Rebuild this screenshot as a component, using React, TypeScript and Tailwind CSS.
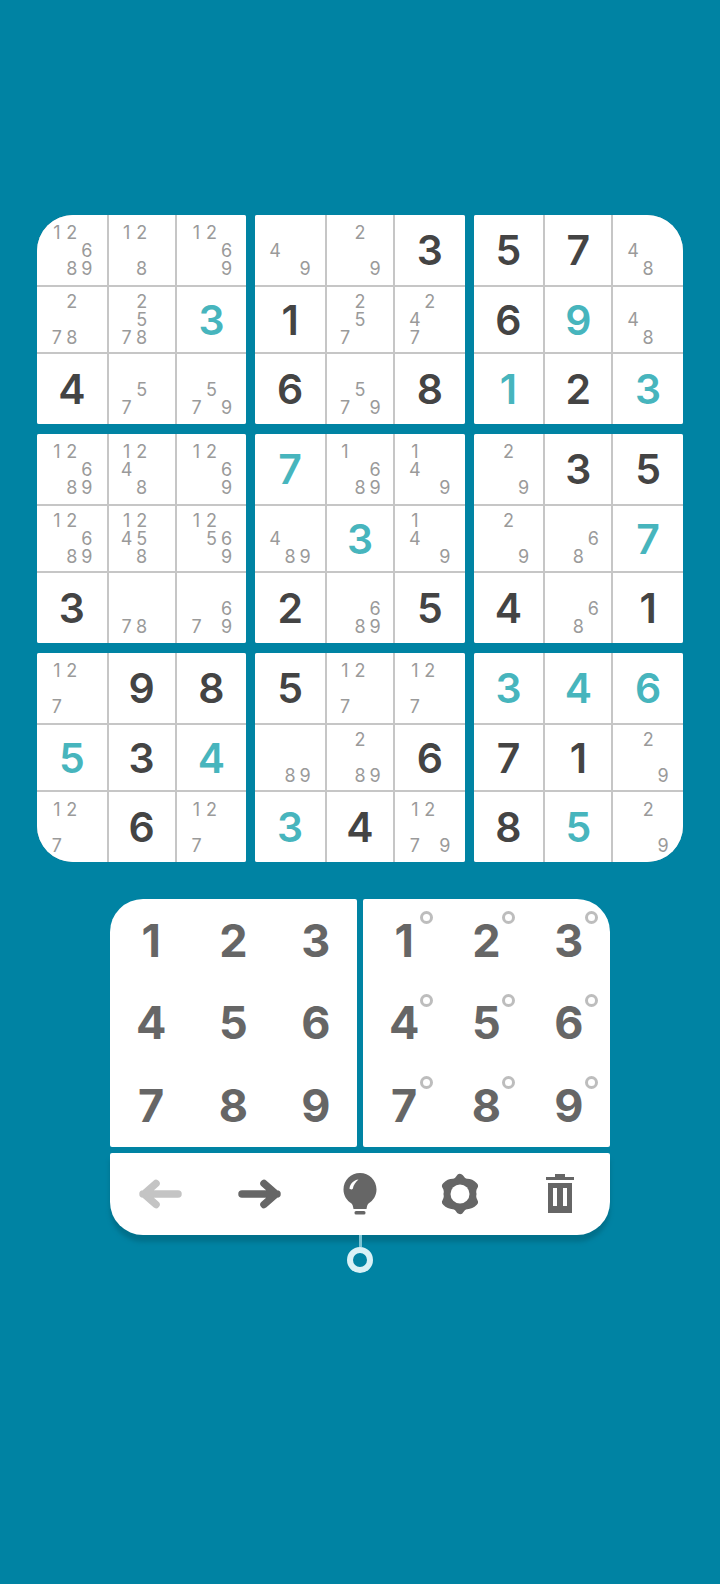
import React from "react";

type Cell = { n: string } | { v: number; t?: boolean };

const n = (s: string): Cell => ({ n: s });
const v = (d: number): Cell => ({ v: d });
const t = (d: number): Cell => ({ v: d, t: true });

const boxes: Cell[][] = [
  [n("12689"), n("128"), n("1269"), n("278"), n("2578"), t(3), v(4), n("57"), n("579")],
  [n("49"), n("29"), v(3), v(1), n("257"), n("247"), v(6), n("579"), v(8)],
  [v(5), v(7), n("48"), v(6), t(9), n("48"), t(1), v(2), t(3)],
  [n("12689"), n("1248"), n("1269"), n("12689"), n("12458"), n("12569"), v(3), n("78"), n("679")],
  [t(7), n("1689"), n("149"), n("489"), t(3), n("149"), v(2), n("689"), v(5)],
  [n("29"), v(3), v(5), n("29"), n("68"), t(7), v(4), n("68"), v(1)],
  [n("127"), v(9), v(8), t(5), v(3), t(4), n("127"), v(6), n("127")],
  [v(5), n("127"), n("127"), n("89"), n("289"), v(6), t(3), v(4), n("1279")],
  [t(3), t(4), t(6), v(7), v(1), n("29"), v(8), t(5), n("29")],
];

const boxCorners = [
  "rounded-[2px] rounded-tl-[36px]",
  "rounded-[2px]",
  "rounded-[2px] rounded-tr-[36px]",
  "rounded-[2px]",
  "rounded-[2px]",
  "rounded-[2px]",
  "rounded-[2px] rounded-bl-[36px]",
  "rounded-[2px]",
  "rounded-[2px] rounded-br-[36px]",
];

const digits = [1, 2, 3, 4, 5, 6, 7, 8, 9];

function Notes({ value }: { value: string }) {
  return (
    <div className="grid grid-cols-[15px_15px_15px] grid-rows-[18px_18px_18px] pt-[1px] text-center text-[18px] leading-[18px] text-[#9a9a9a]">
      {digits.map((d) => (
        <span key={d}>{value.includes(String(d)) ? d : ""}</span>
      ))}
    </div>
  );
}

function SudokuCell({ cell }: { cell: Cell }) {
  return (
    <div className="flex items-center justify-center bg-white">
      {"n" in cell ? (
        <Notes value={cell.n} />
      ) : (
        <span className={cell.t ? "pt-[1px] text-[41px] font-semibold leading-none text-[#47b5bd]" : "pt-[1px] text-[41px] font-semibold leading-none text-[#444444]"}>
          {cell.v}
        </span>
      )}
    </div>
  );
}

function ArrowIcon({ color, flip }: { color: string; flip?: boolean }) {
  return (
    <svg width="44" height="30" viewBox="0 0 44 30" className={flip ? "-scale-x-100" : ""}>
      <path
        d="M5 15H40M18 4.500 6 15l12 10.500"
        fill="none"
        stroke={color}
        strokeWidth="7.500"
        strokeLinecap="round"
        strokeLinejoin="round"
      />
    </svg>
  );
}

function BulbIcon() {
  return (
    <svg width="34" height="42" viewBox="0 0 34 42">
      <path
        d="M17 0C7.900 0 .5 7.400.5 16.500c0 6 3.200 11 8 14 .8.6 1.500 2.500 2 5.500h13c.5-3 1.200-4.900 2-5.500 4.800-3 8-8 8-14C33.500 7.400 26.100 0 17 0Z"
        fill="#666666"
      />
      <path d="M6.500 15.500C7 11 10.500 7 15.500 6.500 12.500 9 10.500 12 9.800 15.800 9 16.800 6.800 16.500 6.500 15.500Z" fill="#ffffff" />
      <rect x="11.500" y="38" width="11" height="3.500" rx="1.500" fill="#666666" />
    </svg>
  );
}

function GearIcon() {
  return (
    <svg width="38" height="42" viewBox="-19 -21 38 42">
      <path
        d="M0-16Q2.500-11.500 6.500-11.200 10.500-11.500 14-8 11.500-4 12.500 0 11.500 4 14 8 10.500 11.500 6.500 11.200 2.500 11.500 0 16-2.500 11.500-6.500 11.200-10.500 11.500-14 8-11.500 4-12.500 0-11.500-4-14-8-10.500-11.500-6.500-11.200-2.500-11.500 0-16Z"
        fill="#666666"
        stroke="#666666"
        strokeWidth="8"
        strokeLinejoin="round"
      />
      <circle r="9.500" fill="#ffffff" />
    </svg>
  );
}

function TrashIcon() {
  return (
    <svg width="28" height="40" viewBox="0 0 28 40">
      <path d="M9 0h10v3h9v3H0V3h9Z" fill="#666666" />
      <path d="M2 9h24v30H2Zm5 5v18h4V14Zm10 0v18h4V14Z" fill="#666666" fillRule="evenodd" />
    </svg>
  );
}

function Pad({ corner, notes }: { corner: string; notes?: boolean }) {
  return (
    <div className={`grid h-[248px] w-[247px] grid-cols-3 grid-rows-3 bg-white text-[#666666] ${corner}`}>
      {digits.map((d) => (
        <div key={d} className="relative flex items-center justify-center text-[45px] font-bold leading-none">
          {d}
          {notes && (
            <span className="absolute left-[57px] top-[12px] h-[13px] w-[13px] rounded-full border-[3px] border-[#bdbdbd]" />
          )}
        </div>
      ))}
    </div>
  );
}

export default function App() {
  return (
    <div className="flex min-h-[1584px] flex-col items-center bg-[#0083a3] pt-[215px] font-['Inter',sans-serif]">
      <div className="grid w-[646px] grid-cols-3 gap-x-[9px] gap-y-[10px]">
        {boxes.map((box, i) => (
          <div
            key={i}
            className={`grid h-[209px] grid-cols-[1fr_66px_1fr] grid-rows-[1fr_65px_1fr] gap-[2px] overflow-hidden bg-[#c6c6c6] ${boxCorners[i]}`}
          >
            {box.map((cell, j) => (
              <SudokuCell key={j} cell={cell} />
            ))}
          </div>
        ))}
      </div>

      <div className="mt-[37px] flex w-[500px] justify-between">
        <Pad corner="rounded-[2px] rounded-tl-[33px]" />
        <Pad corner="rounded-[2px] rounded-tr-[33px]" notes />
      </div>

      <div className="mt-[6px] grid h-[82px] w-[500px] grid-cols-5 items-center justify-items-center rounded-[2px] rounded-b-[33px] bg-white shadow-[0_7px_4px_#00708b]">
        <ArrowIcon color="#c4c4c4" />
        <ArrowIcon color="#666666" flip />
        <BulbIcon />
        <GearIcon />
        <TrashIcon />
      </div>

      <div className="h-[12px] w-[3px] bg-[#7cc3d3]" />
      <div className="h-[26px] w-[26px] rounded-full border-[6px] border-[#d9f1f6]" />
    </div>
  );
}
